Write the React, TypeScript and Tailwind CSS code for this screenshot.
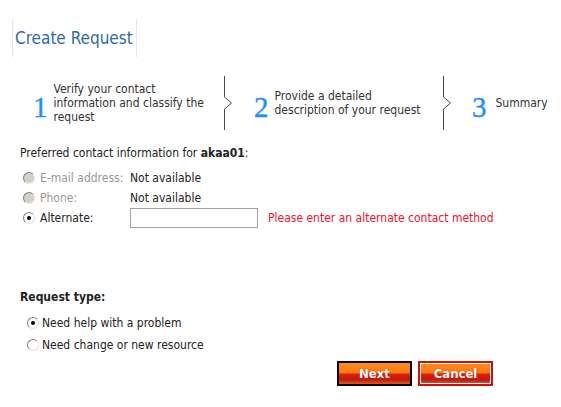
import React from 'react';

const font = { fontFamily: '"DejaVu Sans Condensed", "DejaVu Sans", Tahoma, sans-serif' };

function Radio({ checked = false, disabled = false }: { checked?: boolean; disabled?: boolean }) {
    return (
        <span
            className={
                'relative inline-block h-[12px] w-[12px] shrink-0 rounded-full border ' +
                (disabled
                    ? 'border-t-[#808080] border-l-[#808080] border-b-[#e8e8e8] border-r-[#e8e8e8] bg-[#d4d0c8]'
                    : 'border-t-[#808080] border-l-[#808080] border-b-[#e0e0e0] border-r-[#e0e0e0] bg-white')
            }
        >
            {checked && <span className="absolute left-[3px] top-[3px] h-[4px] w-[4px] rounded-full bg-black" />}
        </span>
    );
}

function Chevron() {
    return (
        <svg width="14" height="54" viewBox="0 0 14 54" className="shrink-0">
            <path d="M1.5 0 V21 L8.5 27 L1.5 33 V54" fill="none" stroke="#4a4a4a" strokeWidth="1" />
        </svg>
    );
}

function StepNum({ n }: { n: string }) {
    return (
        <span
            className="mt-[8px] text-[29px] leading-none text-[#1e8fff] [-webkit-text-stroke:0.4px_#1e8fff]"
            style={{ fontFamily: '"Liberation Serif", "DejaVu Serif", serif' }}
        >
            {n}
        </span>
    );
}

export default function App() {
    return (
        <div className="h-[407px] w-[561px] bg-white text-[12px] text-[#222]" style={font}>
            <div className="px-[12px] pt-[19px]">
                <div className="inline-block border-x border-[#e6e6e6] py-[9px] pl-[2px] pr-[3px]">
                    <h1 className="text-[17px] leading-[20px] text-[#2f6aa3]">Create Request</h1>
                </div>
            </div>

            <div className="mt-[19px] flex h-[54px] items-center">
                <div className="flex w-[223px] items-center pl-[33px]">
                    <StepNum n="1" />
                    <div className="ml-[6px] leading-[14px] text-[#333]">
                        Verify your contact
                        <br />
                        information and classify the
                        <br />
                        request
                    </div>
                </div>
                <Chevron />
                <div className="flex w-[205px] items-center pl-[17px]">
                    <StepNum n="2" />
                    <div className="ml-[6px] leading-[14px] text-[#333]">
                        Provide a detailed
                        <br />
                        description of your request
                    </div>
                </div>
                <Chevron />
                <div className="flex items-center pl-[16px]">
                    <StepNum n="3" />
                    <div className="ml-[9px] leading-[14px] text-[#333]">Summary</div>
                </div>
            </div>

            <div className="mt-[15px] px-[20px]">
                <div className="leading-[16px]">
                    Preferred contact information for <b>akaa01</b>:
                </div>
                <div className="mt-[10px] flex flex-col gap-[6px] pl-[3px]">
                    <div className="flex h-[14px] items-center">
                        <Radio disabled />
                        <span className="ml-[5px] w-[90px] text-[#999]">E-mail address:</span>
                        <span>Not available</span>
                    </div>
                    <div className="flex h-[14px] items-center">
                        <Radio disabled />
                        <span className="ml-[5px] w-[90px] text-[#999]">Phone:</span>
                        <span>Not available</span>
                    </div>
                    <div className="flex h-[14px] items-center">
                        <Radio checked />
                        <span className="ml-[5px] w-[90px]">Alternate:</span>
                        <input className="h-[20px] w-[128px] border border-[#a0a0a0] bg-white outline-none" />
                        <span className="ml-[10px] text-[#f0102c]">Please enter an alternate contact method</span>
                    </div>
                </div>

                <div className="mt-[64px] font-bold leading-[16px]">Request type:</div>
                <div className="mt-[11px] flex flex-col gap-[8px] pl-[7px]">
                    <div className="flex h-[14px] items-center">
                        <Radio checked />
                        <span className="ml-[3px]">Need help with a problem</span>
                    </div>
                    <div className="flex h-[14px] items-center">
                        <Radio />
                        <span className="ml-[3px]">Need change or new resource</span>
                    </div>
                </div>
            </div>

            <div className="mt-[9px] flex justify-end gap-[6px] pr-[68px]">
                <button className="h-[25px] w-[75px] border-2 border-black bg-[linear-gradient(#ff8a1e_0%,#ff7a10_45%,#d42010_55%,#c21a0c_80%,#e05a20_100%)] text-[13px] font-bold text-white [text-shadow:0_0_1px_#a00]">
                    Next
                </button>
                <button className="h-[25px] w-[75px] border-2 border-[#cc1010] bg-[linear-gradient(#ff8a1e_0%,#ff7a10_45%,#d42010_55%,#c21a0c_80%,#e05a20_100%)] text-[13px] font-bold text-white shadow-[inset_0_0_0_1px_#fff] [text-shadow:0_0_1px_#a00]">
                    Cancel
                </button>
            </div>
        </div>
    );
}
